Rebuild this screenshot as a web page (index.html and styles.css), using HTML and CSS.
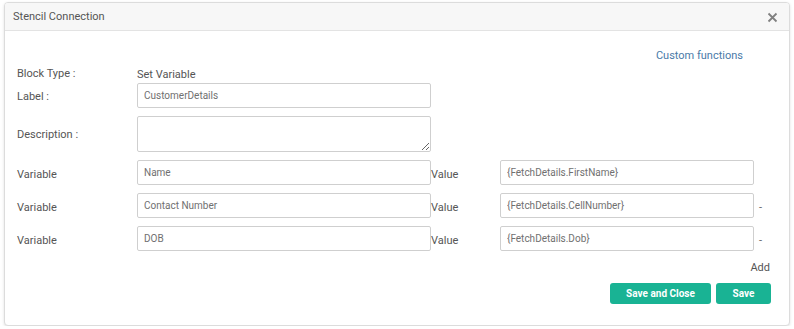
FILE: index.html
```html
<!DOCTYPE html>
<html>
<head>
<meta charset="utf-8">
<link rel="stylesheet" href="styles.css">
</head>
<body>
<div class="dialog">
  <div class="header">
    <span class="title">Stencil Connection</span>
    <svg class="close" width="11" height="11" viewBox="0 0 11 11"><path d="M1.5 1.5 L9.5 9.5 M9.5 1.5 L1.5 9.5" stroke="#808080" stroke-width="1.8" fill="none"/></svg>
  </div>
  <div class="body">
    <div class="custom-row"><a class="link">Custom functions</a></div>
    <div class="form">
      <div class="lbl bt">Block Type :</div><div class="val bt">Set Variable</div>
      <div class="lbl r-label">Label :</div><input class="inp r-label" value="CustomerDetails">
      <div class="lbl r-desc">Description :</div><textarea class="inp ta r-desc"></textarea>
    </div>
    <div class="vars">
      <div class="vrow">
        <div class="lbl">Variable</div><input class="inp" value="Name">
        <div class="vlbl">Value</div><input class="inp vinp" value="{FetchDetails.FirstName}"><span class="dash"></span>
      </div>
      <div class="vrow">
        <div class="lbl">Variable</div><input class="inp" value="Contact Number">
        <div class="vlbl">Value</div><input class="inp vinp" value="{FetchDetails.CellNumber}"><span class="dash">-</span>
      </div>
      <div class="vrow">
        <div class="lbl">Variable</div><input class="inp" value="DOB">
        <div class="vlbl">Value</div><input class="inp vinp" value="{FetchDetails.Dob}"><span class="dash">-</span>
      </div>
    </div>
    <div class="add-row"><span class="add">Add</span></div>
    <div class="btn-row">
      <button class="btn wide">Save and Close</button>
      <button class="btn narrow">Save</button>
    </div>
  </div>
</div>
</body>
</html>
```
FILE: styles.css
```css
html, body {
  margin: 0;
  padding: 0;
  background: #fff;
  font-family: Roboto, "Liberation Sans", sans-serif;
}
.dialog {
  margin: 2px 0 0 4px;
  width: 786px;
  height: 324px;
  box-sizing: border-box;
  border: 1px solid #dcdcdc;
  border-radius: 4px;
  box-shadow: 0 1px 3px rgba(0,0,0,0.12);
  overflow: hidden;
  background: #fff;
}
.header {
  height: 27px;
  background: #f7f7f7;
  border-bottom: 1px solid #e3e3e3;
  display: flex;
  align-items: center;
  justify-content: space-between;
  padding: 0 11px 0 8px;
}
.title {
  font-size: 11px;
  color: #555;
}
.close {
  display: block;
  margin-top: 1px;
}
.body {
  padding: 0 12px;
}
.custom-row {
  display: flex;
  justify-content: flex-end;
  margin-top: 18px;
  padding-right: 34px;
  height: 14px;
  line-height: 14px;
}
.link {
  font-size: 11px;
  color: #4a7aa8;
}
.form {
  display: grid;
  grid-template-columns: 120px 294px;
  row-gap: 0;
  margin-top: 4px;
}
.lbl {
  font-size: 11px;
  color: #555;
  display: flex;
  align-items: center;
  box-sizing: border-box;
}
.val {
  font-size: 11px;
  color: #555;
  display: flex;
  align-items: center;
}
.bt {
  height: 14px;
}
.lbl.bt {
  margin-top: -1px;
}
.inp {
  box-sizing: border-box;
  height: 25px;
  width: 294px;
  border: 1px solid #cfcfcf;
  border-radius: 2px;
  padding: 0 6px;
  font-family: Roboto, "Liberation Sans", sans-serif;
  font-size: 10px;
  color: #707070;
  margin: 0;
  outline: none;
  background: #fff;
}
.r-label {
  margin-top: 2px;
  height: 25px;
}
.lbl.r-label {
  padding-top: 2px;
}
.r-desc {
  margin-top: 8px;
}
.ta {
  height: 36px;
  resize: vertical;
}
.lbl.r-desc {
  height: 36px;
}
.vars {
  display: flex;
  flex-direction: column;
  gap: 8px;
  margin-top: 8px;
}
.vrow {
  display: grid;
  grid-template-columns: 120px 294px 69px 254px 20px;
  height: 25px;
  align-items: center;
}
.vlbl {
  font-size: 11px;
  color: #555;
  display: flex;
  align-items: center;
  height: 25px;
  padding-top: 4px;
  box-sizing: border-box;
}
.vrow .lbl {
  height: 25px;
  padding-top: 4px;
}
.vinp {
  width: 254px;
}
.dash {
  font-size: 11px;
  color: #666;
  padding-left: 5px;
  padding-top: 4px;
}
.add-row {
  display: flex;
  justify-content: flex-end;
  padding-right: 7px;
  margin-top: 10px;
  height: 14px;
  line-height: 14px;
}
.add {
  font-size: 11px;
  color: #555;
}
.btn-row {
  display: flex;
  justify-content: flex-end;
  gap: 5px;
  padding-right: 6px;
  margin-top: 8px;
}
.btn {
  height: 21px;
  border: none;
  border-radius: 3px;
  background: #19b394;
  color: #fff;
  font-family: Roboto, "Liberation Sans", sans-serif;
  font-weight: bold;
  font-size: 10px;
  padding: 0;
}
.wide {
  width: 101px;
}
.narrow {
  width: 55px;
}
```
